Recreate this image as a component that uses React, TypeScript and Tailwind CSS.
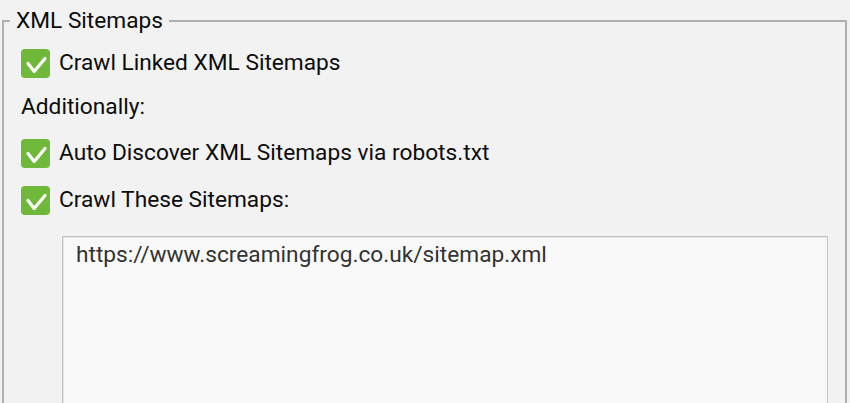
import React from 'react'

function GreenCheck() {
  return (
    <span className="flex h-[29px] w-[29px] shrink-0 items-center justify-center rounded-[4px] bg-[#70b83a]">
      <svg width="29" height="29" viewBox="0 0 29 29" fill="none">
        <path
          d="M7 14.5 L13.2 22.5 L24 9.5"
          stroke="white"
          strokeWidth="3.2"
          strokeLinecap="round"
          strokeLinejoin="round"
        />
      </svg>
    </span>
  )
}

function CheckRow({ label }: { label: string }) {
  return (
    <div className="flex h-[47px] items-center gap-[9px]">
      <GreenCheck />
      <span>{label}</span>
    </div>
  )
}

export default function App() {
  return (
    <div className="h-[403px] w-full overflow-hidden bg-[#f2f2f2] font-['Roboto',sans-serif] text-[22.7px] text-[#0c0c0c]">
      <fieldset className="ml-[2px] mr-[3px] border-2 border-b-0 border-[#b0b0b0]">
        <legend className="ml-[6px] px-[6px] leading-[42px]">XML Sitemaps</legend>
        <div className="pl-[17px]">
          <div className="flex h-[42px] items-center gap-[9px]">
            <GreenCheck />
            <span>Crawl Linked XML Sitemaps</span>
          </div>
          <div className="flex h-[46px] items-center">Additionally:</div>
          <CheckRow label="Auto Discover XML Sitemaps via robots.txt" />
          <CheckRow label="Crawl These Sitemaps:" />
          <textarea
            readOnly
            defaultValue="https://www.screamingfrog.co.uk/sitemap.xml"
            className="mt-[12px] ml-[41px] block h-[220px] w-[766px] resize-none border border-[#c2c2c2] bg-[#f9f9f9] pl-[13px] pt-[4px] leading-[27px] text-[#333] shadow-[inset_1px_1px_1px_rgba(0,0,0,0.08)] outline-none"
          />
        </div>
      </fieldset>
    </div>
  )
}
